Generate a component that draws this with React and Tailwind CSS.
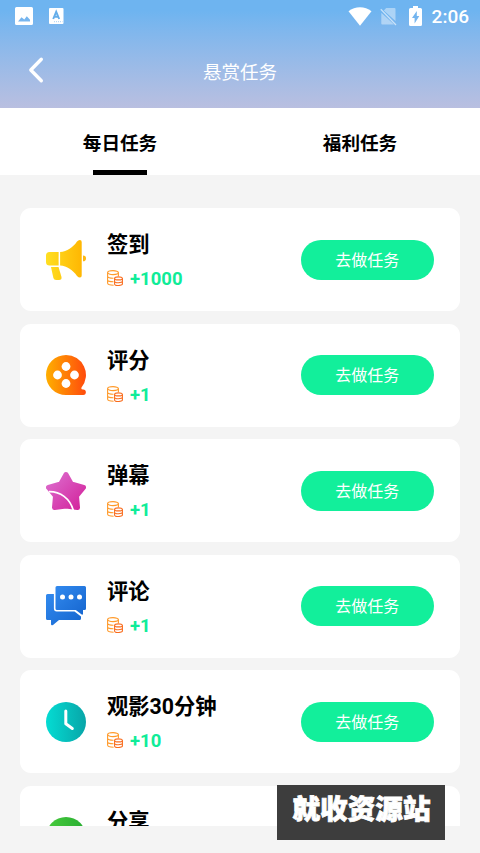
import React from 'react';

const tasks = [
    { title: '签到', reward: '+1000', icon: <HornIcon /> },
    { title: '评分', reward: '+1', icon: <ReelIcon /> },
    { title: '弹幕', reward: '+1', icon: <StarIcon /> },
    { title: '评论', reward: '+1', icon: <CommentIcon /> },
    { title: '观影30分钟', reward: '+10', icon: <ClockIcon /> },
];

function App() {
    return (
        <div className="relative flex h-[853px] w-[480px] flex-col overflow-hidden bg-[#f4f4f4] font-['Roboto','Noto_Sans_CJK_SC',sans-serif]">
            <header className="h-[108px] shrink-0 bg-linear-to-b from-[#6eb4f0] from-10% to-[#b9bfe0] text-white">
                <StatusBar />
                <div className="grid h-[76px] grid-cols-[72px_1fr_72px] items-center">
                    <svg className="ml-[26px] size-7" viewBox="0 0 28 28" fill="none" stroke="white" strokeWidth="3.4" strokeLinecap="round" strokeLinejoin="round">
                        <path d="M15.3 3.2 4.8 14l10.5 10.7" />
                    </svg>
                    <h1 className="pt-[5px] text-center text-[18.5px] leading-7">悬赏任务</h1>
                </div>
            </header>

            <nav className="grid h-[67px] shrink-0 grid-cols-2 bg-white text-[18.6px] font-bold text-black">
                <Tab label="每日任务" active />
                <Tab label="福利任务" />
            </nav>

            <main className="flex h-[651px] shrink-0 flex-col gap-[12.5px] overflow-hidden px-5 pt-[33px]">
                {tasks.map((task) => (
                    <TaskCard key={task.title} {...task} />
                ))}
                <section className="flex h-[103px] shrink-0 items-start rounded-[11px] bg-white pl-[26px]">
                    <div className="mt-[31px] size-10"><ShareIcon /></div>
                    <h2 className="ml-[21px] mt-[19px] text-[21.3px] font-bold leading-[34px] text-black">分享</h2>
                </section>
            </main>

            <div className="absolute left-[277px] top-[785px] flex h-[55px] w-[168px] justify-center bg-[#3d3d3d] pl-px pt-[5px] text-[27.6px] font-black leading-[40px] text-white [-webkit-text-stroke:0.8px_white]">
                就收资源站
            </div>
        </div>
    );
}

function StatusBar() {
    return (
        <div className="flex h-8 items-center justify-between pl-[15px] pr-[11px]">
            <div className="flex items-center gap-4">
                <svg className="size-[18px]" viewBox="0 0 18 18">
                    <path fill="white" fillRule="evenodd" d="M1.5 0h15Q18 0 18 1.500v15Q18 18 16.500 18h-15Q0 18 0 16.500v-15Q0 0 1.500 0ZM3 14.500h12v-1.800l-3.200-3.400-2.500 3.100-2.800-2.200Z" />
                </svg>
                <svg className="h-4 w-[15px]" viewBox="0 0 15 16">
                    <rect width="14.500" height="16" rx="1" fill="white" />
                    <path d="M4.200 11 7.200 3.800 10.200 11M5.200 8.700h4" fill="none" stroke="#65aeea" strokeWidth="1.900" />
                    <path d="M5 13.700h8.500" stroke="#a8cff2" strokeWidth="1" strokeDasharray="1 1" />
                </svg>
            </div>
            <div className="flex items-center">
                <svg className="h-[19px] w-6" viewBox="0 0 24 19">
                    <path fill="white" d="M12 18.700.5 4.300C7 -1 17 -1 23.500 4.300Z" />
                </svg>
                <svg className="ml-2 h-[19px] w-[17px]" viewBox="0 0 17 19">
                    <path fill="white" fillOpacity=".42" d="M6.200 1H14.500Q15.500 1 15.500 2V14L3.800 3.600ZM1.300 5.800 14 17.500H2.300Q1.300 17.500 1.300 16.500Z" />
                    <path d="M.8 2.200 16 18" stroke="white" strokeOpacity=".6" strokeWidth="1.300" />
                </svg>
                <svg className="ml-3 h-5 w-[13px]" viewBox="0 0 13 20">
                    <path fill="white" fillRule="evenodd" d="M4 0h5v2h2.500Q13 2 13 3.500V18.500Q13 20 11.500 20h-10Q0 20 0 18.500V3.500Q0 2 1.500 2H4ZM7.800 5 3 12h2.600v5.500L10.300 10H7.800Z" />
                </svg>
                <span className="ml-[10px] pt-px text-[19px] font-medium leading-8">2:06</span>
            </div>
        </div>
    );
}

function Tab({ label, active }) {
    return (
        <div className="flex flex-col items-center justify-between">
            <span className="pt-[22px] leading-7">{label}</span>
            {active && <span className="h-[5px] w-[54px] bg-black" />}
        </div>
    );
}

function TaskCard({ title, reward, icon }) {
    return (
        <section className="flex h-[103px] shrink-0 items-center rounded-[11px] bg-white pl-[26px] pr-[26px]">
            <div className="size-10">{icon}</div>
            <div className="ml-[21px] flex-1">
                <h2 className="pt-[2px] text-[21.3px] font-bold leading-[34px] text-black">{title}</h2>
                <div className="mt-[3px] flex items-center">
                    <CoinIcon />
                    <span className="ml-[7px] text-[18.5px] font-bold leading-7 text-[#10ec98]">{reward}</span>
                </div>
            </div>
            <button className="h-10 w-[133.500px] rounded-full bg-[#12ef9b] pt-[2px] text-base text-white">去做任务</button>
        </section>
    );
}

function CoinIcon() {
    return (
        <svg className="-mt-0.5 size-4" viewBox="0 0 16 16" fill="none" strokeWidth="1.1">
            <g stroke="#ff9a2a">
                <ellipse cx="6" cy="2.600" rx="5.400" ry="2" />
                <path d="M.6 2.600v10.400c0 1.300 2.500 2.200 6 2.200M11.400 2.600v3.400M.6 6.200c0 1.200 2.500 2.100 5.900 2M.6 9.800c0 1.200 2.500 2 5.900 2" />
            </g>
            <g stroke="#f96b1c">
                <ellipse cx="11.500" cy="8.400" rx="3.900" ry="1.500" />
                <path d="M7.600 8.400v5.500c0 2.100 7.800 2.100 7.800 0V8.400M7.600 11.200c0 2 7.800 2 7.800 0" />
            </g>
        </svg>
    );
}

function HornIcon() {
    return (
        <svg viewBox="0 0 40 40">
            <defs>
                <linearGradient id="horn" gradientUnits="userSpaceOnUse" x1="0" y1="0" x2="38" y2="0">
                    <stop stopColor="#ffdf22" />
                    <stop offset="1" stopColor="#ffb400" />
                </linearGradient>
            </defs>
            <g fill="url(#horn)">
                <path d="M3.500 12H12.600V25.500H3.500Q0 25.500 0 22V15.500Q0 12 3.500 12Z" />
                <path d="M14.100 12C21 11.500 27 7.500 31 1.500Q32.300 0 33.800 0 35.700 0 35.700 2V35.500Q35.700 37.500 34 37.500 32.500 37.500 31 36C27 30 21 26 14.100 25.500Z" />
                <path d="M5 27H12.500L15.500 37Q16 40 13 40H10Q8 40 7.400 38Z" />
            </g>
            <path d="M37 15.600Q40 15.600 40 18.400T37 21.200Z" fill="#fdb813" />
        </svg>
    );
}

function ReelIcon() {
    return (
        <svg viewBox="0 0 40 40">
            <defs>
                <linearGradient id="reel">
                    <stop stopColor="#ffaf00" />
                    <stop offset="1" stopColor="#ff4b0c" />
                </linearGradient>
            </defs>
            <path fill="url(#reel)" d="M20 0A20 20 0 0 1 35.500 32.600Q34.800 34.500 37 34.500A2.750 2.750 0 0 1 37.250 40H20A20 20 0 0 1 20 0Z" />
            <g fill="white">
                <circle cx="20" cy="11.500" r="4.400" />
                <circle cx="11.500" cy="20" r="4.400" />
                <circle cx="28.500" cy="20" r="4.400" />
                <circle cx="20" cy="28.500" r="4.400" />
            </g>
        </svg>
    );
}

function StarIcon() {
    return (
        <svg viewBox="0 0 40 40">
            <defs>
                <linearGradient id="star" gradientUnits="userSpaceOnUse" x1="4" y1="4" x2="36" y2="36">
                    <stop stopColor="#dc6ccd" />
                    <stop offset="1" stopColor="#d3259d" />
                </linearGradient>
            </defs>
            <path fill="url(#star)" stroke="url(#star)" strokeWidth="5" strokeLinejoin="round" d="M20 3.500 25.300 13 37.500 16.500 30.500 25 31.500 36.500 20 35 8.500 36.500 9.500 25 2.500 16.500 14.700 13Z" />
            <path fill="none" stroke="white" strokeWidth="1.700" d="M3 20.700C14 20.500 24 27 27.500 40" />
        </svg>
    );
}

function CommentIcon() {
    return (
        <svg viewBox="0 0 40 40">
            <defs>
                <linearGradient id="comment" x1="0" y1="0" x2="1" y2="1">
                    <stop stopColor="#3189ee" />
                    <stop offset="1" stopColor="#1666cf" />
                </linearGradient>
            </defs>
            <path fill="url(#comment)" d="M1.500 8H7.900V22.500Q7.900 25.500 10.700 25.500H28.500L35 30.500V32.500Q35 34 33.500 34H13L7 39Q5 40 5 38V34H1.500Q0 34 0 32.500V9.500Q0 8 1.500 8Z" />
            <path fill="url(#comment)" d="M11 0H38.500Q40 0 40 1.500V22.500Q40 24 38.500 24H37V28Q36.500 29.500 35 28L29.800 24H11Q9.500 24 9.500 22.500V1.500Q9.500 0 11 0Z" />
            <g fill="white">
                <circle cx="16.500" cy="11" r="2.500" />
                <circle cx="25" cy="11" r="2.500" />
                <circle cx="33.500" cy="11" r="2.500" />
            </g>
        </svg>
    );
}

function ClockIcon() {
    return (
        <svg viewBox="0 0 40 40">
            <defs>
                <linearGradient id="clock">
                    <stop stopColor="#04dcd3" />
                    <stop offset="1" stopColor="#08a5a8" />
                </linearGradient>
            </defs>
            <circle cx="20" cy="20" r="20" fill="url(#clock)" />
            <path d="M19.800 9V21.800L26.300 26.500" fill="none" stroke="white" strokeWidth="3" strokeLinecap="round" strokeLinejoin="round" />
        </svg>
    );
}

function ShareIcon() {
    return (
        <svg viewBox="0 0 40 40">
            <defs>
                <linearGradient id="share">
                    <stop stopColor="#48cb3c" />
                    <stop offset="1" stopColor="#28ad32" />
                </linearGradient>
            </defs>
            <circle cx="20" cy="20" r="20" fill="url(#share)" />
        </svg>
    );
}

export default App;
